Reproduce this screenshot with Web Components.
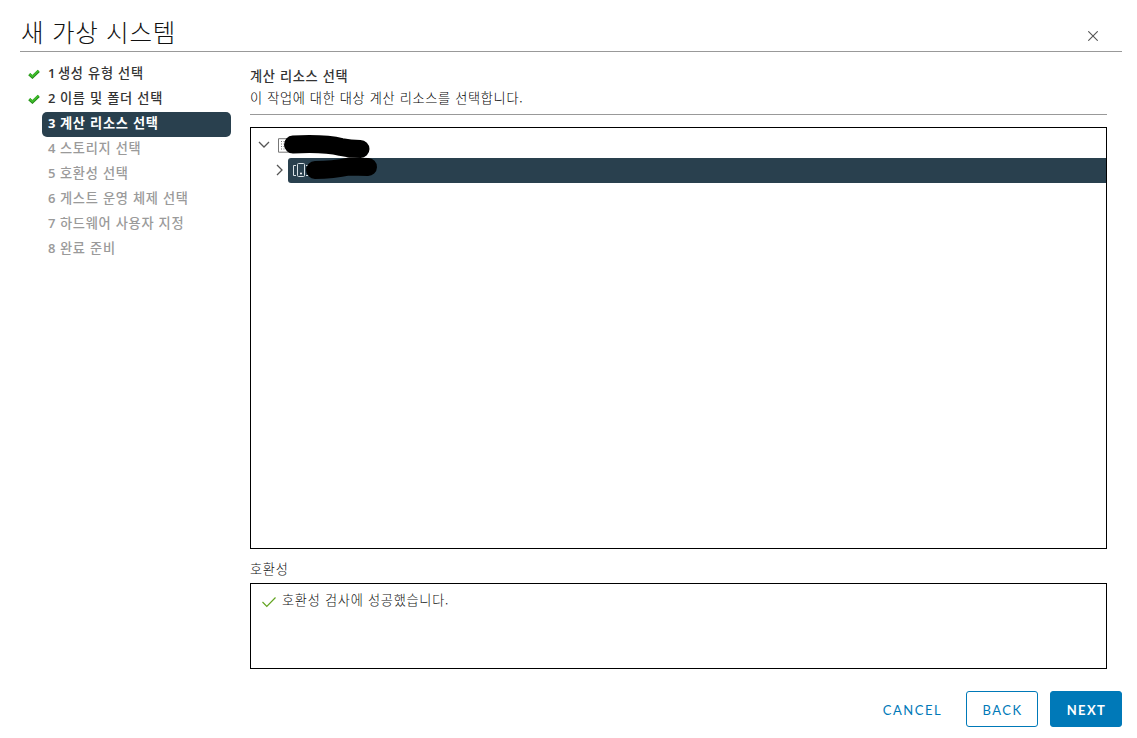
<!DOCTYPE html>
<html lang="ko">
<head>
<meta charset="utf-8">
<title>새 가상 시스템</title>
<style>
html, body { margin: 0; height: 100%; background: #fff; }
body { font-family: "Noto Sans CJK KR", "Noto Sans", sans-serif; font-size: 13px; color: #333; overflow: hidden; }
</style>
</head>
<body>
<vm-wizard heading="새 가상 시스템">
  <wizard-step slot="steps" num="1" state="done">생성 유형 선택</wizard-step>
  <wizard-step slot="steps" num="2" state="done">이름 및 폴더 선택</wizard-step>
  <wizard-step slot="steps" num="3" state="active">계산 리소스 선택</wizard-step>
  <wizard-step slot="steps" num="4">스토리지 선택</wizard-step>
  <wizard-step slot="steps" num="5">호환성 선택</wizard-step>
  <wizard-step slot="steps" num="6">게스트 운영 체제 선택</wizard-step>
  <wizard-step slot="steps" num="7">하드웨어 사용자 지정</wizard-step>
  <wizard-step slot="steps" num="8">완료 준비</wizard-step>
  <page-heading>
    <span slot="title">계산 리소스 선택</span>
    이 작업에 대한 대상 계산 리소스를 선택합니다.
  </page-heading>
  <resource-tree></resource-tree>
  <compat-panel label="호환성">호환성 검사에 성공했습니다.</compat-panel>
  <wizard-button slot="actions" kind="link">CANCEL</wizard-button>
  <wizard-button slot="actions" kind="outline">BACK</wizard-button>
  <wizard-button slot="actions" kind="primary">NEXT</wizard-button>
</vm-wizard>
<script>
function define(name, render) {
  customElements.define(name, class extends HTMLElement {
    connectedCallback() {
      if (!this.shadowRoot) this.attachShadow({ mode: 'open' }).innerHTML = render(this);
    }
  });
}

define('vm-wizard', el => `
<style>
:host { display: flex; flex-direction: column; box-sizing: border-box; width: 1137px; height: 738px; padding: 0 15px 11px 20px; }
header { display: flex; justify-content: space-between; box-sizing: border-box; height: 52px; border-bottom: 1px solid #999; }
h1 { margin: 14px 0 0 1px; font-size: 24.5px; line-height: 36px; font-weight: 300; letter-spacing: .75px; color: #111; }
header svg { margin: 31px 24px 0 0; }
.body { flex: 1; display: grid; grid-template-columns: 211px 857px; column-gap: 19px; min-height: 0; }
nav { padding-top: 10px; }
main { padding-top: 13px; }
footer { display: flex; justify-content: flex-end; gap: 12px; height: 36px; }
</style>
<header><h1>${el.getAttribute('heading')}</h1>
<svg width="10" height="10" viewBox="0 0 10 10"><path d="M.3.3 9.7 9.7M9.7.3.3 9.7" fill="none" stroke="#555" stroke-width="1.1"/></svg></header>
<div class="body"><nav><slot name="steps"></slot></nav><main><slot></slot></main></div>
<footer><slot name="actions"></slot></footer>`);

define('wizard-step', el => `
<style>
:host { display: grid; grid-template-columns: 22px 189px; height: 25px; font-size: 13.2px; line-height: 21px; font-weight: 500; color: #9a9a9a; white-space: nowrap; }
:host([state=done]) { color: #333; }
:host([state=active]) { color: #fff; font-weight: 700; }
:host([state=active]) .label { background: #29404e; }
.label { display: flex; gap: 4px; border-radius: 5px; padding-left: 6px; letter-spacing: .7px; }
.num { font-family: "Open Sans", sans-serif; font-weight: 600; font-size: 13px; line-height: 23px; width: 8px; letter-spacing: 0; }
:host([num="1"]) .label { gap: 2px; }
:host([state=active]) .num { font-weight: 700; }
svg { margin: 7px 0 0 8px; }
</style>
<span>${el.getAttribute('state') === 'done' ? '<svg width="12" height="10" viewBox="0 0 12 10"><path d="M1.2 5.1 4.4 8 10.8 1.8" fill="none" stroke="#248c18" stroke-width="3"/><path d="M1.600 5 4.400 7.400 10.400 1.600" fill="none" stroke="#3fbd2c" stroke-width="1.900"/></svg>' : ''}</span>
<div class="label"><span class="num">${el.getAttribute('num')}</span><slot></slot></div>`);

define('page-heading', () => `
<style>
:host { display: block; height: 49px; border-bottom: 1px solid #999; color: #333; line-height: 22px; font-size: 13.2px; letter-spacing: .66px; white-space: nowrap; }
.t { font-weight: 500; }
.d { font-weight: 300; color: #000; }
</style>
<div class="t"><slot name="title"></slot></div><div class="d"><slot></slot></div>`);

define('resource-tree', () => `
<style>
:host { display: block; position: relative; box-sizing: border-box; height: 422px; margin-top: 12px; padding-top: 5px; border: 1px solid #000; }
.row { display: flex; align-items: center; height: 25px; }
.root { padding-left: 7px; gap: 8px; }
.child { padding-left: 24px; gap: 4px; }
.row > svg:first-child { margin-bottom: 2px; }
.sel { flex: 1; display: flex; align-items: center; height: 25px; background: #29404e; border-radius: 3px 0 0 3px; padding-left: 5px; }
svg { display: block; flex: none; }
.ink { position: absolute; left: 32px; top: 5px; }
</style>
<div class="row root"><svg width="12" height="8" viewBox="0 0 12 8"><path d="M1 1 6 6 11 1" fill="none" stroke="#555" stroke-width="1.3"/></svg>
<svg width="14" height="15" viewBox="0 0 14 15"><path d="M.5 .7H12v13.500H.5z" fill="#fff" stroke="#777"/><path d="M3 3.500h7M3 6h7M3 8.500h7M3 11h7" stroke="#777" stroke-dasharray="1 1.5"/></svg></div>
<div class="row child"><svg width="9" height="12" viewBox="0 0 9 12"><path d="M2 1 7 6 2 11" fill="none" stroke="#555" stroke-width="1.3"/></svg>
<div class="sel"><svg width="16" height="15" viewBox="0 0 16 15"><g fill="none" stroke="#d8e0e4"><path d="M5.500 .5h5q1 0 1 1v11q0 1-1 1h-5q-1 0-1-1v-11q0-1 1-1zM3 2.500H.5v10H3M13 2.500h2.500v10H13"/></g><circle cx="8" cy="10.500" r="1" fill="#fff"/></svg></div></div>
<svg class="ink" width="96" height="50" viewBox="283 133 96 50"><path d="M293 144.500Q325 143 341 147Q350 149 360.500 149" fill="none" stroke="#000" stroke-width="18" stroke-linecap="round" stroke-linejoin="round"/><path d="M315 170Q333 170 349 166.500L368 167" fill="none" stroke="#000" stroke-width="18" stroke-linecap="round" stroke-linejoin="round"/></svg>`);

define('compat-panel', el => `
<style>
:host { display: block; font-weight: 300; font-size: 13.2px; letter-spacing: .72px; color: #111; }
.cap { height: 34px; line-height: 40px; }
.box { display: flex; gap: 6px; box-sizing: border-box; height: 86px; padding: 5px 11px; border: 1px solid #000; line-height: 22px; }
svg { margin-top: 7px; }
</style>
<div class="cap">${el.getAttribute('label')}</div>
<div class="box"><svg width="14" height="12" viewBox="0 0 14 12"><path d="M.5 6 4.800 10.300 13.500 1.500" fill="none" stroke="#62a420" stroke-width="1.2"/></svg><span><slot></slot></span></div>`);

define('wizard-button', () => `
<style>
:host { display: flex; align-items: center; justify-content: center; box-sizing: border-box; width: 72px; height: 36px; border: 1px solid #0079b8; border-radius: 3px; color: #0079b8; font-family: Lato, sans-serif; font-weight: 400; font-size: 13px; letter-spacing: 1.5px; padding: 1px 0 0 1px; }
:host([kind=link]) { border-color: transparent; width: 84px; }
:host([kind=primary]) { background: #0079b8; color: #fff; font-weight: 700; letter-spacing: 1.4px; }
</style><slot></slot>`);
</script>
</body>
</html>
